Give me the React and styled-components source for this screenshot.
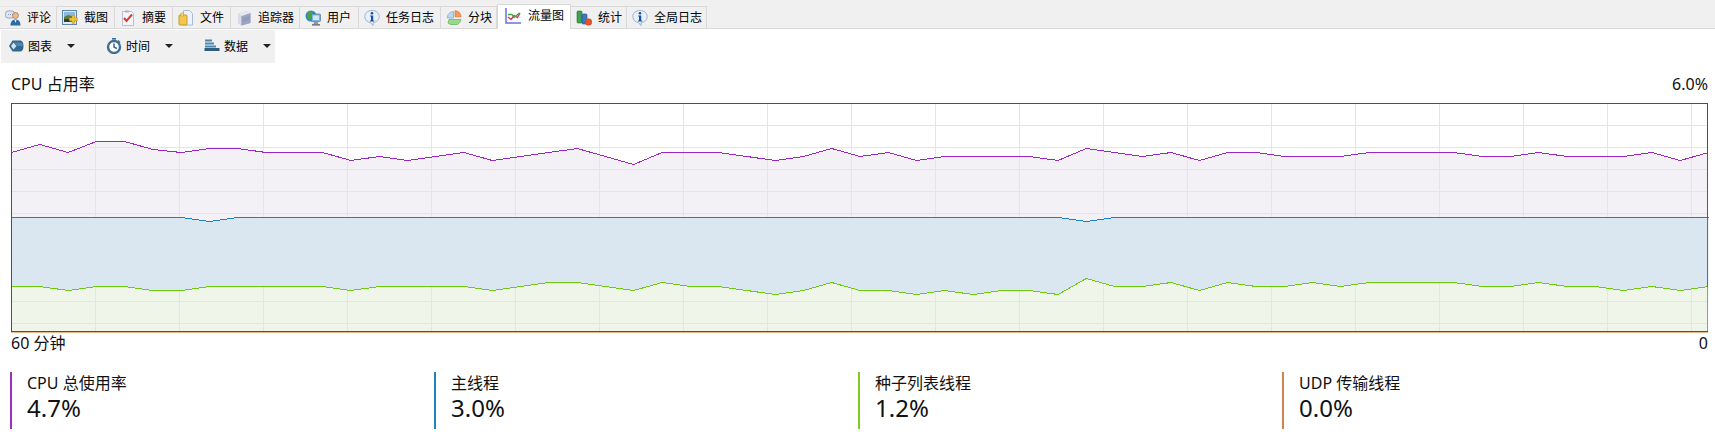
import React from "react";
import styled, { createGlobalStyle } from "styled-components";

const Global = createGlobalStyle`
  html, body { margin: 0; padding: 0; background: #fff; }
  body { font-family: "Noto Sans", "Noto Sans CJK SC", sans-serif; color: #000; overflow: hidden; }
`;

const Page = styled.div`
  width: 1715px;
  height: 434px;
  display: flex;
  flex-direction: column;
`;

const TabBar = styled.div`
  height: 29px;
  box-sizing: border-box;
  display: flex;
  align-items: flex-end;
  background: #f0f0f0;
  border-bottom: 1px solid #d9d9d9;
  padding-top: 4px;
`;

const Tab = styled.div`
  width: ${(p) => p.$w}px;
  box-sizing: border-box;
  height: ${(p) => (p.$active ? 25 : 22)}px;
  margin-bottom: ${(p) => (p.$active ? -1 : 0)}px;
  padding: ${(p) => (p.$active ? "0 0 3px 7px" : "0 0 0 5px")};
  display: flex;
  align-items: center;
  gap: ${(p) => (p.$active ? 7 : 6)}px;
  font-size: 12px;
  line-height: 16px;
  white-space: nowrap;
  background: ${(p) => (p.$active ? "#fff" : "#f0f0f0")};
  border-top: 1px solid #d9d9d9;
  border-right: 1px solid #d9d9d9;
  border-left: ${(p) => (p.$active ? "1px solid #d9d9d9" : "none")};
  &:first-child { border-top-color: #e6e6e6; }
`;

const Toolbar = styled.div`
  width: 274px;
  height: 33px;
  box-sizing: border-box;
  padding-bottom: 2px;
  margin: 1px 0 0 1px;
  display: flex;
  align-items: center;
  background: #f0f0f0;
  font-size: 12px;
`;

const ToolItem = styled.div`
  width: 98px;
  flex: none;
  box-sizing: border-box;
  padding-left: 7px;
  display: flex;
  align-items: center;
  gap: 4px;
`;

const Caret = styled.span`
  width: 0;
  height: 0;
  margin-left: 11px;
  border-left: 4px solid transparent;
  border-right: 4px solid transparent;
  border-top: 4px solid #222;
`;

const ChartWrap = styled.div`
  padding: 0 7px 0 11px;
  margin-top: 10px;
`;

const ChartHead = styled.div`
  display: flex;
  justify-content: space-between;
  font-size: 16px;
  line-height: 22px;
  height: 22px;
  margin-bottom: 8px;
  color: #111;
`;

const ChartFoot = styled(ChartHead)`
  margin: -1px 0 0;
`;

const ChartSvg = styled.svg`
  display: block;
  width: 1698px;
  height: 230px;
`;

const Stats = styled.div`
  display: grid;
  grid-template-columns: repeat(4, 424px);
  padding-left: 10px;
  margin-top: 18px;
`;

const Stat = styled.div`
  height: 57px;
  box-sizing: border-box;
  border-left: 2px solid ${(p) => p.$c};
  padding-left: 15px;
  color: #111;
`;

const StatLabel = styled.div`
  font-size: 16px;
  line-height: 22px;
`;

const StatValue = styled.div`
  font-size: 24px;
  line-height: 28px;
`;

const Ico = ({ children, s = 16 }) => (
  <svg width={s} height={s} viewBox="0 0 16 16" style={{ flex: "none" }}>{children}</svg>
);

const Info = () => (
  <Ico>
    <path d="M8 0.5C3.8 0.5 .8 3 .8 6.6c0 3.3 2.6 5.6 5.6 6l2.6 3 .2-3c3.5-.4 6-2.8 6-6C15.200 3 12.200.5 8 .5z" fill="#e6f0fa" stroke="#9db4cc" />
    <circle cx="8" cy="3.300" r="1.300" fill="#1b4f9c" />
    <path d="M6.200 5.500h3v5h1v1h-4.200v-1h1v-4h-.8z" fill="#1b4f9c" />
  </Ico>
);

const icons = {
  comment: (
    <Ico>
      <rect x="0.500" y="1" width="9" height="7" rx="2.500" fill="#dfe6f2" stroke="#98a6bd" />
      <path d="M3 4.500h.8M5 4.500h.8M7 4.500h.8" stroke="#6d7f99" />
      <circle cx="10.500" cy="5.500" r="3" fill="#e8b98c" stroke="#8c6a4a" strokeWidth=".6" />
      <path d="M5.500 15.500c0-4 2-6 5-6s5 2 5 6z" fill="#2a6aa8" />
      <path d="M9.500 10l1 3 1-3z" fill="#f3f3f3" />
    </Ico>
  ),
  shot: (
    <Ico>
      <rect x="0.500" y="0.500" width="14" height="14" fill="#dfeaf5" stroke="#5e86ad" />
      <rect x="2" y="2" width="11" height="5" fill="#8fb9d9" />
      <path d="M2 7l4-2 7 2v5H2z" fill="#5b7d3e" />
      <path d="M2 9h6v3H2z" fill="#2e3f2a" />
      <path d="M10 7h3v3h3v3h-3v3h-3v-3H7v-3h3z" transform="translate(1 -1) scale(.9)" fill="#f0c23a" stroke="#b88a1a" strokeWidth=".5" />
    </Ico>
  ),
  summary: (
    <Ico>
      <path d="M2.500 1.500h9l2 2v12h-11z" fill="#f4f6fb" stroke="#b7c0d4" />
      <rect x="5" y="0.500" width="4" height="2" fill="#aab4c8" />
      <path d="M4 8l2.500 3L12 4.500" fill="none" stroke="#e0392b" strokeWidth="2" />
    </Ico>
  ),
  file: (
    <Ico>
      <path d="M5.500.5h6l3 3v11.500h-9z" fill="#eef3fb" stroke="#a9bcd8" />
      <rect x="1" y="5" width="8" height="10" rx="1" fill="#f1c84f" stroke="#c79a28" />
      <rect x="3" y="3" width="2.500" height="3" fill="#f7e08c" stroke="#c79a28" strokeWidth=".6" />
    </Ico>
  ),
  tracker: (
    <Ico>
      <path d="M2 3.500l9-2.500 3.500 2v10l-9 2.500L2 13z" fill="#b9bdd6" />
      <path d="M2 3.500L5.500 6v9.500L2 13z" fill="#d8dbe8" />
      <path d="M5.500 6l9-3v10l-9 2.500z" fill="#9ea3c4" />
      <path d="M2 3.500l9-2.500 3.500 2-9 3z" fill="#e6e8f1" />
      <path d="M6.500 9l7-2M6.500 11l7-2" stroke="#82879f" strokeWidth=".6" />
    </Ico>
  ),
  user: (
    <Ico>
      <circle cx="6" cy="6" r="5.500" fill="#2f84c9" />
      <path d="M2 3l4-2 2 2-2 3 1 3-3 1-2-3z" fill="#47a34a" />
      <rect x="6.500" y="4" width="9" height="7.500" rx="1" fill="#7fb2d9" stroke="#55758f" strokeWidth=".7" />
      <rect x="8" y="5.500" width="6" height="4.500" fill="#cfe6f6" />
      <path d="M9 11.500h3.500l.8 2.500H8.500z" fill="#8b97a3" />
      <path d="M7 14.200h8v1.300H7z" fill="#55606b" />
    </Ico>
  ),
  info: <Info />,
  pie: (
    <Ico>
      <path d="M7.500 1.500v6.500H1.200C1.200 4.500 4 1.500 7.500 1.500z" fill="#b9d6f2" stroke="#7da6cf" strokeWidth=".7" />
      <path d="M9 .8c3.500 0 6 2.700 6 6H9z" fill="#f29a5c" stroke="#d8712f" strokeWidth=".7" />
      <path d="M3 9.500h12c-.6 2.700-2 4-3.500 5h-7L2 13z" fill="#9bd98a" stroke="#5fae58" strokeWidth=".7" />
    </Ico>
  ),
  flow: (
    <Ico>
      <path d="M1 0v15h15" fill="none" stroke="#6a73d6" strokeWidth="1.500" />
      <path d="M3 9l3 2.500 3-4 3.500 2L15 5" fill="none" stroke="#e02a5a" strokeWidth="1.300" />
      <path d="M3 6.500h4l2 3 5.500-4.500" fill="none" stroke="#33a83c" strokeWidth="1.300" />
    </Ico>
  ),
  stats: (
    <Ico>
      <rect x="1" y="1" width="5" height="12" rx="1" fill="#3fa34d" stroke="#23762f" strokeWidth=".6" />
      <rect x="6" y="4" width="5" height="10" rx="1" fill="#3d78c2" stroke="#24508e" strokeWidth=".6" />
      <circle cx="12.500" cy="12" r="3.300" fill="#e8512a" stroke="#b33a1a" strokeWidth=".5" />
    </Ico>
  ),
  chart: (
    <Ico>
      <path d="M1 8l3.500-5.500H12c2.500 0 3.500 2.500 3.500 5.500s-1 5.500-3.500 5.500H4.500z" fill="#33688f" />
      <path d="M3 8l2.500-3.500 3 3.500-3 3.500z" fill="#d4e4f0" />
      <path d="M8.500 8L5.500 4.500h8c1 1 1.500 2 1.500 3.500z" fill="#4f86ae" />
    </Ico>
  ),
  time: (
    <Ico>
      <rect x="6" y="0" width="4" height="1.600" fill="#3f6d93" />
      <circle cx="8" cy="9" r="6" fill="#fff" stroke="#3f6d93" strokeWidth="2.400" />
      <path d="M8 5.500V9l3 1.500" fill="none" stroke="#3f6d93" strokeWidth="1.600" />
      <path d="M12 2.500l2 2" stroke="#3f6d93" strokeWidth="1.500" />
    </Ico>
  ),
  data: (
    <Ico>
      <path d="M1 2.500h7M1 5.500h9M1 8.500h11" stroke="#4a86ae" strokeWidth="2" />
      <path d="M0.500 11.500h15" stroke="#2f5e80" strokeWidth="3" />
    </Ico>
  ),
};

const tabs = [
  ["comment", "评论", 57], ["shot", "截图", 58], ["summary", "摘要", 58], ["file", "文件", 58],
  ["tracker", "追踪器", 69], ["user", "用户", 59], ["info", "任务日志", 82], ["pie", "分块", 56],
  ["flow", "流量图", 74, true], ["stats", "统计", 56], ["info", "全局日志", 80],
];

const purple = [152,144,152,141,141,149,152,148,148,152,152,152,160,156,160,156,152,160,156,152,148,156,164,152,152,152,156,160,156,148,156,152,160,156,156,156,156,160,148,152,156,152,160,152,152,156,156,156,152,152,152,152,156,156,152,156,156,156,152,160,152];
const green = [286,286,290,286,286,290,290,286,286,286,286,286,290,286,286,286,286,290,286,282,282,286,290,282,286,286,290,294,290,282,290,290,294,290,294,290,290,294,278,286,286,282,290,282,286,286,282,286,282,282,282,282,286,286,282,286,286,290,286,290,286];
const blue = green.map(() => 217);
blue[7] = 221;
blue[38] = 221;

const OY = 103;
const px = (k) => 28.283 * k + 0.5;
const pts = (a) => a.map((y, k) => `${px(k).toFixed(1)},${y - OY + 0.5}`).join(" ");
const rev = (a) => a.map((y, k) => `${px(k).toFixed(1)},${y - OY + 0.5}`).reverse().join(" ");

const W = 1697, H = 228;

const Chart = () => {
  const vs = [];
  for (let x = 84; x < W; x += 84) vs.push(x + 0.5);
  const hs = [];
  for (let y = 22; y < H; y += 22) hs.push(y + 0.5);
  const lastP = purple[60] - OY + .5, lastB = blue[60] - OY + .5, lastG = green[60] - OY + .5;
  return (
    <ChartSvg viewBox="0 0 1698 230">
      <rect width="1698" height="230" fill="#fff" />
      <polygon points={`0.5,${H} ${pts(purple)} ${W},${H}`} fill="#f3f1f6" />
      <polygon points={`0.5,${H} ${pts(green)} ${W},${H}`} fill="#eff6e9" />
      <g stroke="#ebe0f1" strokeWidth="1" shapeRendering="crispEdges">
        {vs.map((x) => <line key={x} x1={x} x2={x} y1="0" y2={H} />)}
        {hs.map((y) => <line key={y} x1="0" x2={W} y1={y} y2={y} />)}
      </g>
      <polygon points={`${pts(blue)} ${rev(green)}`} fill="#d8e6f0" fillOpacity=".9" />
      <g fill="none" strokeWidth="1" shapeRendering="crispEdges">
        <polyline points={pts(purple)} stroke="#9a28c0" />
        <polyline points={pts(blue)} stroke="#1f80c0" />
        <polyline points={pts(green)} stroke="#6ccb0c" />
        <line x1="0" x2={W} y1={H + 1.5} y2={H + 1.5} stroke="#ecb48c" />
        <rect x=".5" y=".5" width={W - 1} height={H} stroke="#8a22a8" />
        <line x1={W - .5} x2={W - .5} y1={lastP} y2={lastB} stroke="#9a28c0" />
        <line x1={W - .5} x2={W - .5} y1={lastB} y2={lastG} stroke="#1f80c0" />
        <line x1={W - .5} x2={W - .5} y1={lastG} y2={H} stroke="#6ccb0c" />
      </g>
    </ChartSvg>
  );
};

const stats = [
  ["CPU 总使用率", "4.7%", "#9b30bf"],
  ["主线程", "3.0%", "#2182c0"],
  ["种子列表线程", "1.2%", "#7ccb1e"],
  ["UDP 传输线程", "0.0%", "#cf8350"],
];

export default function App() {
  return (
    <Page>
      <Global />
      <TabBar>
        {tabs.map(([ic, t, w, a]) => (
          <Tab key={t} $w={w} $active={a}>{icons[ic]}<span>{t}</span></Tab>
        ))}
      </TabBar>
      <Toolbar>
        <ToolItem>{icons.chart}<span>图表</span><Caret /></ToolItem>
        <ToolItem>{icons.time}<span>时间</span><Caret /></ToolItem>
        <ToolItem>{icons.data}<span>数据</span><Caret /></ToolItem>
      </Toolbar>
      <ChartWrap>
        <ChartHead><span>CPU 占用率</span><span>6.0%</span></ChartHead>
        <Chart />
        <ChartFoot><span>60 分钟</span><span>0</span></ChartFoot>
      </ChartWrap>
      <Stats>
        {stats.map(([l, v, c]) => (
          <Stat key={l} $c={c}>
            <StatLabel>{l}</StatLabel>
            <StatValue>{v}</StatValue>
          </Stat>
        ))}
      </Stats>
    </Page>
  );
}
